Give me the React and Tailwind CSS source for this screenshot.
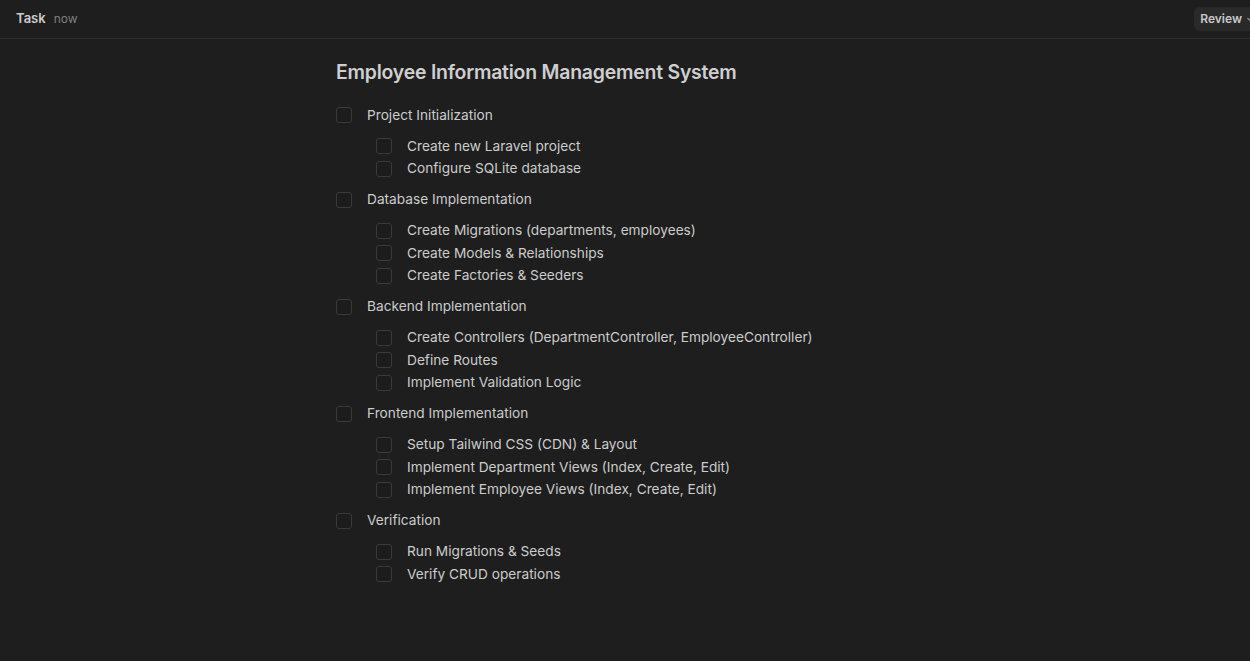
import React from "react";

const groups = [
  { title: "Project Initialization", items: ["Create new Laravel project", "Configure SQLite database"] },
  { title: "Database Implementation", items: ["Create Migrations (departments, employees)", "Create Models & Relationships", "Create Factories & Seeders"] },
  { title: "Backend Implementation", items: ["Create Controllers (DepartmentController, EmployeeController)", "Define Routes", "Implement Validation Logic"] },
  { title: "Frontend Implementation", items: ["Setup Tailwind CSS (CDN) & Layout", "Implement Department Views (Index, Create, Edit)", "Implement Employee Views (Index, Create, Edit)"] },
  { title: "Verification", items: ["Run Migrations & Seeds", "Verify CRUD operations"] },
];

function Box() {
  return <span className="w-4 h-4 shrink-0 rounded-[3px] border border-[#3a3a3a] bg-[#1c1c1c]" />;
}

export default function App() {
  return (
    <div className="min-h-[661px] bg-[#1e1e1e] text-[#cccccc] overflow-hidden" style={{ fontFamily: "Inter, 'Noto Sans', sans-serif" }}>
      <header className="h-[39px] border-b border-[#2c2c2c] flex items-center justify-between pl-4">
        <div className="flex items-baseline gap-2">
          <span className="text-[13px] font-semibold text-[#cccccc]">Task</span>
          <span className="text-[12px] text-[#7f7f7f]">now</span>
        </div>
        <div className="flex items-center gap-1 h-6 pl-1.5 pr-3 -mr-[16px] rounded-md bg-[#2a2a2a] text-[12px] font-semibold text-[#c8c8c8]">
          Review
          <svg width="8" height="8" viewBox="0 0 8 8" fill="none" stroke="#999" strokeWidth="1.2"><path d="M1.5 3l2.5 2.5L6.5 3" /></svg>
        </div>
      </header>
      <main className="w-[578px] mx-auto pt-[20px]">
        <h1 className="text-[19.4px] font-semibold text-[#cfcfcf] leading-[26px] tracking-[-0.2px]">Employee Information Management System</h1>
        <div className="mt-[19px] flex flex-col gap-[8.5px]">
          {groups.map((g) => (
            <div key={g.title}>
              <div className="flex items-center gap-[15px] h-[22.5px] text-[13.7px]">
                <Box />
                <span>{g.title}</span>
              </div>
              <div className="mt-[8.5px] pl-10 flex flex-col">
                {g.items.map((it) => (
                  <div key={it} className="flex items-center gap-[15px] h-[22.5px] text-[13.7px]">
                    <Box />
                    <span>{it}</span>
                  </div>
                ))}
              </div>
            </div>
          ))}
        </div>
      </main>
    </div>
  );
}
